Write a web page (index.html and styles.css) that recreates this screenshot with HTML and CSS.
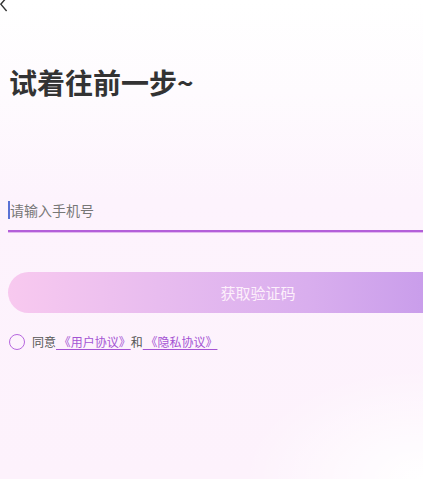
FILE: index.html
```html
<!DOCTYPE html>
<html lang="zh">
<head>
<meta charset="utf-8">
<link rel="stylesheet" href="styles.css">
</head>
<body>
<div class="page">
  <div class="header">
    <svg class="back" width="10" height="14" viewBox="0 0 10 14"><path d="M7.5 -3.5 L0.8 4.2 L6.6 11" fill="none" stroke="#333" stroke-width="1.4"/></svg>
  </div>
  <div class="content">
    <h1 class="title">试着往前一步~</h1>
    <div class="field">
      <span class="caret"></span><span class="placeholder">请输入手机号</span>
    </div>
    <div class="btn">获取验证码</div>
    <div class="agree">
      <span class="radio"></span>
      <span class="agree-text">同意<a class="link">&nbsp;《用户协议》</a>和<a class="link">&nbsp;《隐私协议》</a></span>
    </div>
  </div>
</div>
</body>
</html>
```
FILE: styles.css
```css
html, body {
  margin: 0;
  padding: 0;
  overflow: hidden;
}
body {
  width: 423px;
  height: 479px;
  font-family: "Noto Sans CJK SC", "Noto Sans", sans-serif;
  background:
    radial-gradient(ellipse 180px 110px at 100% 100%, #ffffff 0%, rgba(255,255,255,0) 100%),
    linear-gradient(180deg, #ffffff 0px, #fefbfe 90px, #fdf3fd 200px, #fdf2fc 479px);
}
.page {
  display: flex;
  flex-direction: column;
}
.header {
  height: 14px;
  display: flex;
}
.back {
  display: block;
}
.content {
  width: 500px;
  margin-left: 8px;
  display: flex;
  flex-direction: column;
}
.title {
  margin: 51px 0 0 1px;
  font-size: 28px;
  line-height: 34px;
  font-weight: 700;
  color: #333333;
  letter-spacing: 0;
}
.field {
  margin-top: 91px;
  height: 42px;
  border-bottom: 2px solid #b35fd9;
  box-shadow: 0 1px 0 #e3b9ef;
  display: flex;
  align-items: center;
  box-sizing: border-box;
}
.caret {
  width: 2px;
  height: 18px;
  background: #5a72d6;
}
.placeholder {
  font-size: 14px;
  color: #777777;
  line-height: 20px;
}
.btn {
  margin-top: 40px;
  height: 41px;
  border-radius: 21px 0 0 21px;
  background: linear-gradient(90deg, #f8c9ef 0%, #e8bcef 30%, #d9aeee 60%, #c99deb 84%, #bd93e8 100%);
  color: #fdf0fb;
  font-size: 15px;
  display: flex;
  align-items: center;
  justify-content: center;
}
.agree {
  margin-top: 21px;
  display: flex;
  align-items: center;
  gap: 7px;
  padding-left: 1px;
}
.radio {
  width: 14px;
  height: 14px;
  border: 1.5px solid #b767df;
  border-radius: 50%;
}
.agree-text {
  font-size: 12px;
  color: #555555;
  line-height: 16px;
}
.link {
  color: #a453d3;
  text-decoration: underline;
  text-underline-offset: 2px;
}
```
